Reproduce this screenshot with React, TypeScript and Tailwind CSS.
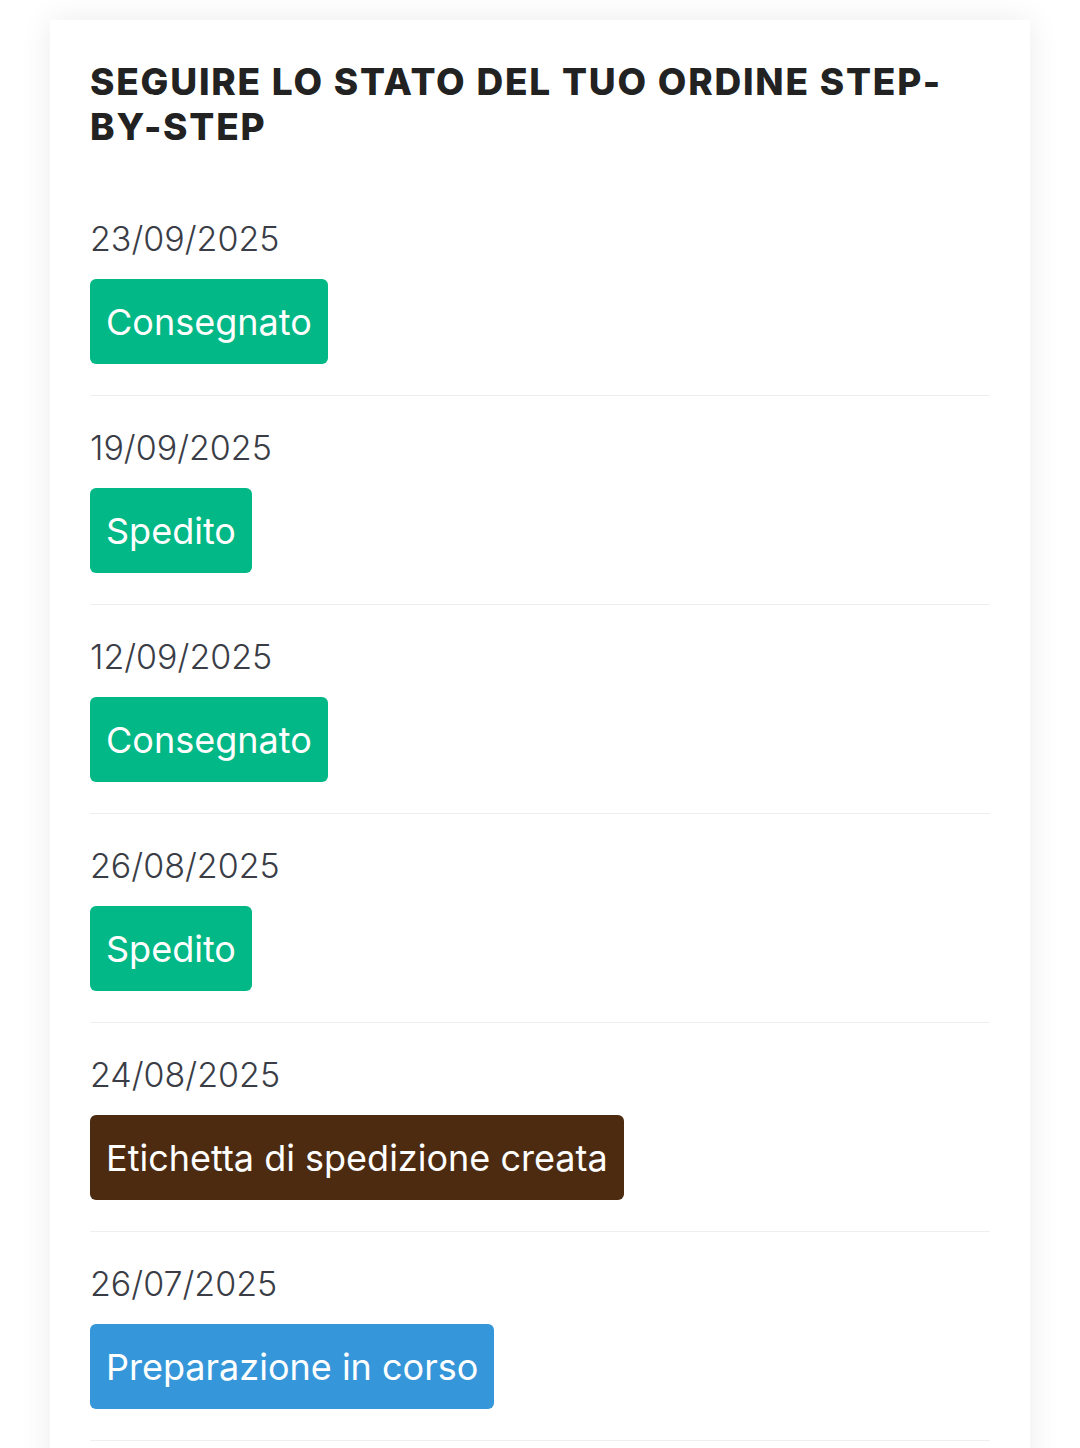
import React from 'react';

type Step = { date: string; label: string; color: string };

const steps: Step[] = [
  { date: '23/09/2025', label: 'Consegnato', color: 'bg-[#02b886]' },
  { date: '19/09/2025', label: 'Spedito', color: 'bg-[#02b886]' },
  { date: '12/09/2025', label: 'Consegnato', color: 'bg-[#02b886]' },
  { date: '26/08/2025', label: 'Spedito', color: 'bg-[#02b886]' },
  { date: '24/08/2025', label: 'Etichetta di spedizione creata', color: 'bg-[#4c2b11]' },
  { date: '26/07/2025', label: 'Preparazione in corso', color: 'bg-[#3597d9]' },
];

export default function App() {
  return (
    <div className="min-h-screen w-full bg-white px-[50px] pt-[20px] font-['Inter',sans-serif]">
      <section className="bg-white px-10 pt-[39px] pb-10 shadow-[0_0_30px_rgba(0,0,0,0.08)]">
        {/* Heading */}
        <h2 className="text-[37px] font-extrabold uppercase leading-[45px] tracking-[1.8px] text-[#222222]">
          Seguire lo stato del tuo ordine step-by-step
        </h2>

        {/* Timeline rows */}
        <div className="mt-[38px]">
          {steps.map((s, i) => (
            <div key={i} className="border-b border-[#eeeeee] pt-[28px] pb-[31px]">
              <div className="text-[34px] font-light leading-[48px] text-[#3a3d46]">{s.date}</div>
              <span
                className={`mt-4 inline-flex h-[85px] items-center rounded-[6px] px-4 text-[36px] text-white ${s.color}`}
              >
                {s.label}
              </span>
            </div>
          ))}
        </div>
      </section>
    </div>
  );
}
